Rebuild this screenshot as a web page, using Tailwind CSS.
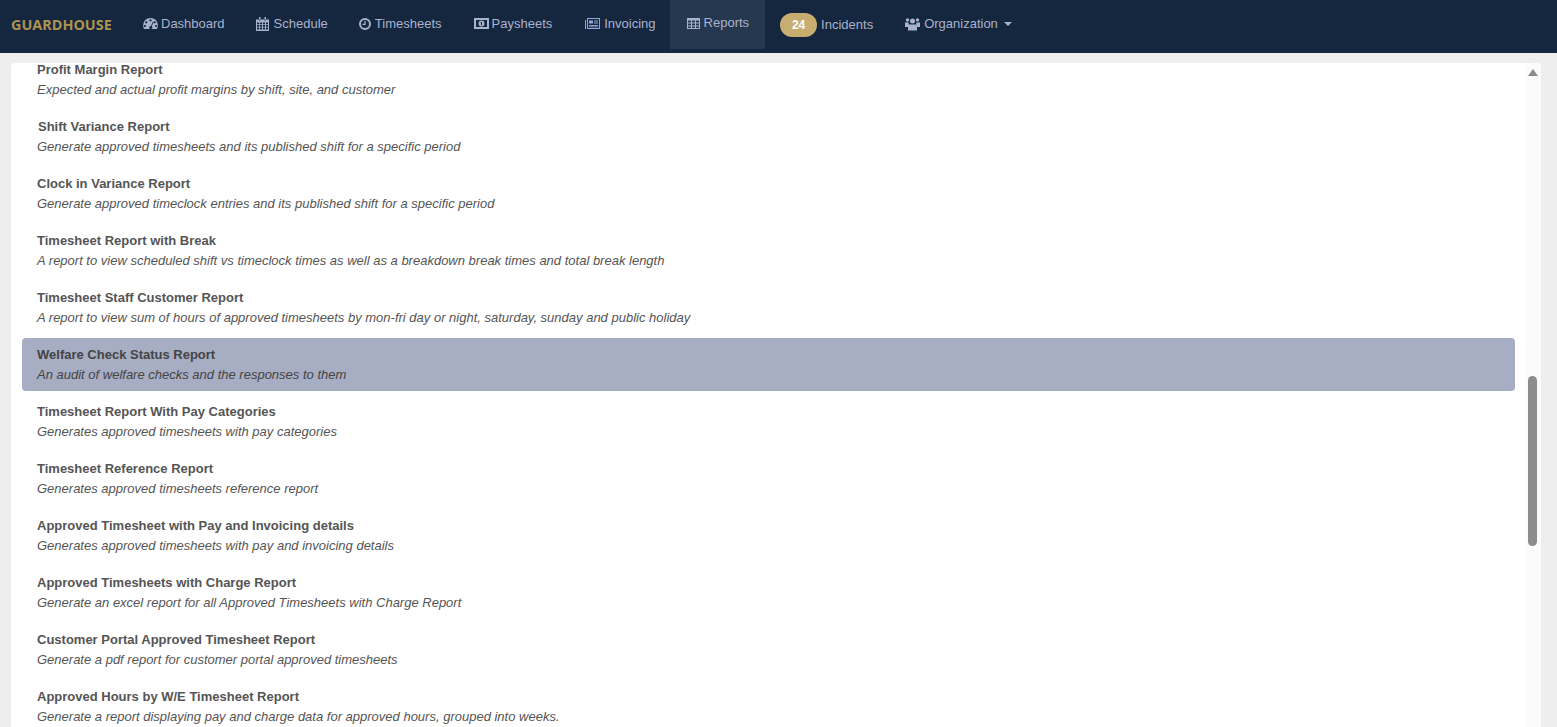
<!DOCTYPE html>
<html lang="en">
<head>
    <meta charset="UTF-8">
    <title>Guardhouse - Reports</title>
    <script src="https://cdn.jsdelivr.net/npm/@tailwindcss/browser@4"></script>
</head>
<body class="h-screen overflow-hidden flex flex-col bg-[#eeeeee] font-['Liberation_Sans',Arial,sans-serif] text-[13px] text-[#555555]">
    <!-- Navigation -->
    <nav class="h-[53px] shrink-0 bg-[#15263f] flex items-start text-[#a9b3cc]">
        <a class="w-[128px] h-[50px] pl-[11px] flex items-center text-[14.4px] font-bold font-['Open_Sans',sans-serif] text-[#ad9350]">GUARDHOUSE</a>
        <a class="h-[50px] pl-[15px] pr-[16px] pb-[3px] flex items-center gap-[3px]">
            <svg class="w-[15px] h-[13px]" viewBox="0 0 16 14" fill="currentColor"><path d="M8 1a8 8 0 0 0-8 8c0 1.600.5 3 1.200 4h13.600c.7-1 1.200-2.400 1.200-4a8 8 0 0 0-8-8Zm0 1.500a1.200 1.200 0 1 1 0 2.400 1.200 1.200 0 0 1 0-2.400ZM3.500 4.500a1.200 1.200 0 1 1 0 2.400 1.200 1.200 0 0 1 0-2.400Zm9 0a1.200 1.200 0 1 1 0 2.400 1.200 1.200 0 0 1 0-2.400ZM2 8.500a1.200 1.200 0 1 1 0 2.400 1.200 1.200 0 0 1 0-2.400Zm12 0a1.200 1.200 0 1 1 0 2.400 1.200 1.200 0 0 1 0-2.400ZM10.500 5l.8.300-2 4.800a1.600 1.600 0 1 1-.8-.3l2-4.800Z" fill-rule="evenodd"/></svg>
            <span>Dashboard</span>
        </a>
        <a class="h-[50px] pl-[15px] pr-[15px] pb-[3px] flex items-center gap-[5px]">
            <svg class="w-[13px] h-[14px]" viewBox="0 0 13 14" fill="currentColor"><path d="M0 2.500h13V14H0ZM1 5.500v1.800h2.200V5.500Zm3 0v1.800h2.100V5.500Zm3 0v1.800h2.100V5.500Zm3 0v1.800h2V5.500ZM1 8v1.800h2.200V8Zm3 0v1.800h2.100V8Zm3 0v1.800h2.100V8Zm3 0v1.800h2V8ZM1 10.500v2h2.200v-2Zm3 0v2h2.100v-2Zm3 0v2h2.100v-2Zm3 0v2h2v-2ZM3 0h1.500v3.500H3ZM8.500 0H10v3.500H8.500Z" fill-rule="evenodd"/></svg>
            <span>Schedule</span>
        </a>
        <a class="h-[50px] pl-[16px] pr-[16px] pb-[3px] flex items-center gap-[4px]">
            <svg class="w-[12px] h-[12px]" viewBox="0 0 12 12" fill="none" stroke="currentColor"><circle cx="6" cy="6" r="5" stroke-width="2"/><path d="M6 3v3.300H3.500" stroke-width="1.300"/></svg>
            <span>Timesheets</span>
        </a>
        <a class="h-[50px] pl-[16px] pr-[17px] pb-[3px] flex items-center gap-[3px]">
            <svg class="w-[15px] h-[11px]" viewBox="0 0 15 11" fill="currentColor"><path d="M0 0h15v11H0ZM2 2v7h11V2ZM7.500 2.500a3 3 0 1 1 0 6 3 3 0 0 1 0-6Z" fill-rule="evenodd"/><path d="M6.500 4H8v3.300H7V4.800h-.5Z" fill="#15263f"/></svg>
            <span>Paysheets</span>
        </a>
        <a class="h-[50px] pl-[16px] pr-[14px] pb-[3px] flex items-center gap-[4px]">
            <svg class="w-[15px] h-[11px] text-[#8fa6d6]" viewBox="0 0 15 11" fill="currentColor"><path d="M0 2h1v9H0ZM2 0h13v11H2ZM3 1v9h11V1ZM4 2.500h4v3H4ZM9 2.500h4v1H9ZM9 4.500h4v1H9ZM4 7h9v1H4ZM4 8.500h9v.8H4Z" fill-rule="evenodd"/></svg>
            <span>Invoicing</span>
        </a>
        <a class="h-[49px] pl-[17px] pr-[16px] pb-[3px] flex items-center gap-[4px] bg-[#263750]">
            <svg class="w-[13px] h-[11px]" viewBox="0 0 13 11" fill="currentColor"><path d="M0 0h13v11H0ZM1 2.500v2h3v-2Zm4 0v2h3v-2Zm4 0v2h3v-2ZM1 5.500v2h3v-2Zm4 0v2h3v-2Zm4 0v2h3v-2ZM1 8.500V10h3V8.500Zm4 0V10h3V8.500Zm4 0V10h3V8.500Z" fill-rule="evenodd"/></svg>
            <span>Reports</span>
        </a>
        <a class="h-[50px] pl-[15px] pr-[16px] flex items-center gap-[4px]">
            <span class="w-[37px] h-[24px] rounded-full bg-[#c8ad71] text-white text-[12px] font-bold flex items-center justify-center">24</span>
            <span class="-mt-[1px]">Incidents</span>
        </a>
        <a class="h-[50px] pl-[16px] pr-[16px] pb-[3px] flex items-center gap-[4px]">
            <svg class="w-[15px] h-[14px]" viewBox="0 0 15 13" fill="currentColor"><circle cx="7.500" cy="3.500" r="2.500"/><circle cx="2.500" cy="2.500" r="1.700"/><circle cx="12.500" cy="2.500" r="1.700"/><path d="M0 5h3.500l.5 3H3v1.500H0ZM15 5h-3.500l-.5 3h1v1.500h3ZM4 7h7l1 1v5H3V8Z"/></svg>
            <span>Organization</span>
            <span class="ml-[2px] mt-[1px] w-0 h-0 border-x-[4px] border-x-transparent border-t-[4px] border-t-[#a9b3cc]"></span>
        </a>
    </nav>

    <!-- Report list -->
    <main class="flex-1 min-h-0 mt-[10px] ml-[11px] mr-[16px] rounded-t-[4px] bg-white flex overflow-hidden">
        <div class="flex-1 min-w-0 pl-[11px] pr-[10px] -mt-[10px] leading-[20px]">
            <div class="h-[53px] mb-[4px] pl-[15px] pt-[7px]">
                <p class="font-bold">Profit Margin Report</p>
                <p class="italic">Expected and actual profit margins by shift, site, and customer</p>
            </div>
            <div class="h-[53px] mb-[4px] pl-[15px] pt-[7px]">
                <p class="font-bold ml-[1px]">Shift Variance Report</p>
                <p class="italic">Generate approved timesheets and its published shift for a specific period</p>
            </div>
            <div class="h-[53px] mb-[4px] pl-[15px] pt-[7px]">
                <p class="font-bold">Clock in Variance Report</p>
                <p class="italic">Generate approved timeclock entries and its published shift for a specific period</p>
            </div>
            <div class="h-[53px] mb-[4px] pl-[15px] pt-[7px]">
                <p class="font-bold">Timesheet Report with Break</p>
                <p class="italic">A report to view scheduled shift vs timeclock times as well as a breakdown break times and total break length</p>
            </div>
            <div class="h-[53px] mb-[4px] pl-[15px] pt-[7px]">
                <p class="font-bold">Timesheet Staff Customer Report</p>
                <p class="italic">A report to view sum of hours of approved timesheets by mon-fri day or night, saturday, sunday and public holiday</p>
            </div>
            <div class="h-[53px] mb-[4px] pl-[15px] pt-[7px] rounded-[4px] bg-[#a7adc2] text-[#444444]">
                <p class="font-bold">Welfare Check Status Report</p>
                <p class="italic">An audit of welfare checks and the responses to them</p>
            </div>
            <div class="h-[53px] mb-[4px] pl-[15px] pt-[7px]">
                <p class="font-bold">Timesheet Report With Pay Categories</p>
                <p class="italic">Generates approved timesheets with pay categories</p>
            </div>
            <div class="h-[53px] mb-[4px] pl-[15px] pt-[7px]">
                <p class="font-bold">Timesheet Reference Report</p>
                <p class="italic">Generates approved timesheets reference report</p>
            </div>
            <div class="h-[53px] mb-[4px] pl-[15px] pt-[7px]">
                <p class="font-bold">Approved Timesheet with Pay and Invoicing details</p>
                <p class="italic">Generates approved timesheets with pay and invoicing details</p>
            </div>
            <div class="h-[53px] mb-[4px] pl-[15px] pt-[7px]">
                <p class="font-bold">Approved Timesheets with Charge Report</p>
                <p class="italic">Generate an excel report for all Approved Timesheets with Charge Report</p>
            </div>
            <div class="h-[53px] mb-[4px] pl-[15px] pt-[7px]">
                <p class="font-bold">Customer Portal Approved Timesheet Report</p>
                <p class="italic">Generate a pdf report for customer portal approved timesheets</p>
            </div>
            <div class="h-[53px] mb-[4px] pl-[15px] pt-[7px]">
                <p class="font-bold">Approved Hours by W/E Timesheet Report</p>
                <p class="italic">Generate a report displaying pay and charge data for approved hours, grouped into weeks.</p>
            </div>
        </div>
        <!-- Scrollbar -->
        <div class="w-[16px] shrink-0 bg-[#fbfbfb] flex flex-col items-start pl-[3px]">
            <span class="mt-[6px] w-0 h-0 border-x-[5px] border-x-transparent border-b-[7px] border-b-[#8a8a8a]"></span>
            <span class="mt-[300px] w-[9px] h-[170px] rounded-full bg-[#8c8c8c]"></span>
        </div>
    </main>
</body>
</html>
